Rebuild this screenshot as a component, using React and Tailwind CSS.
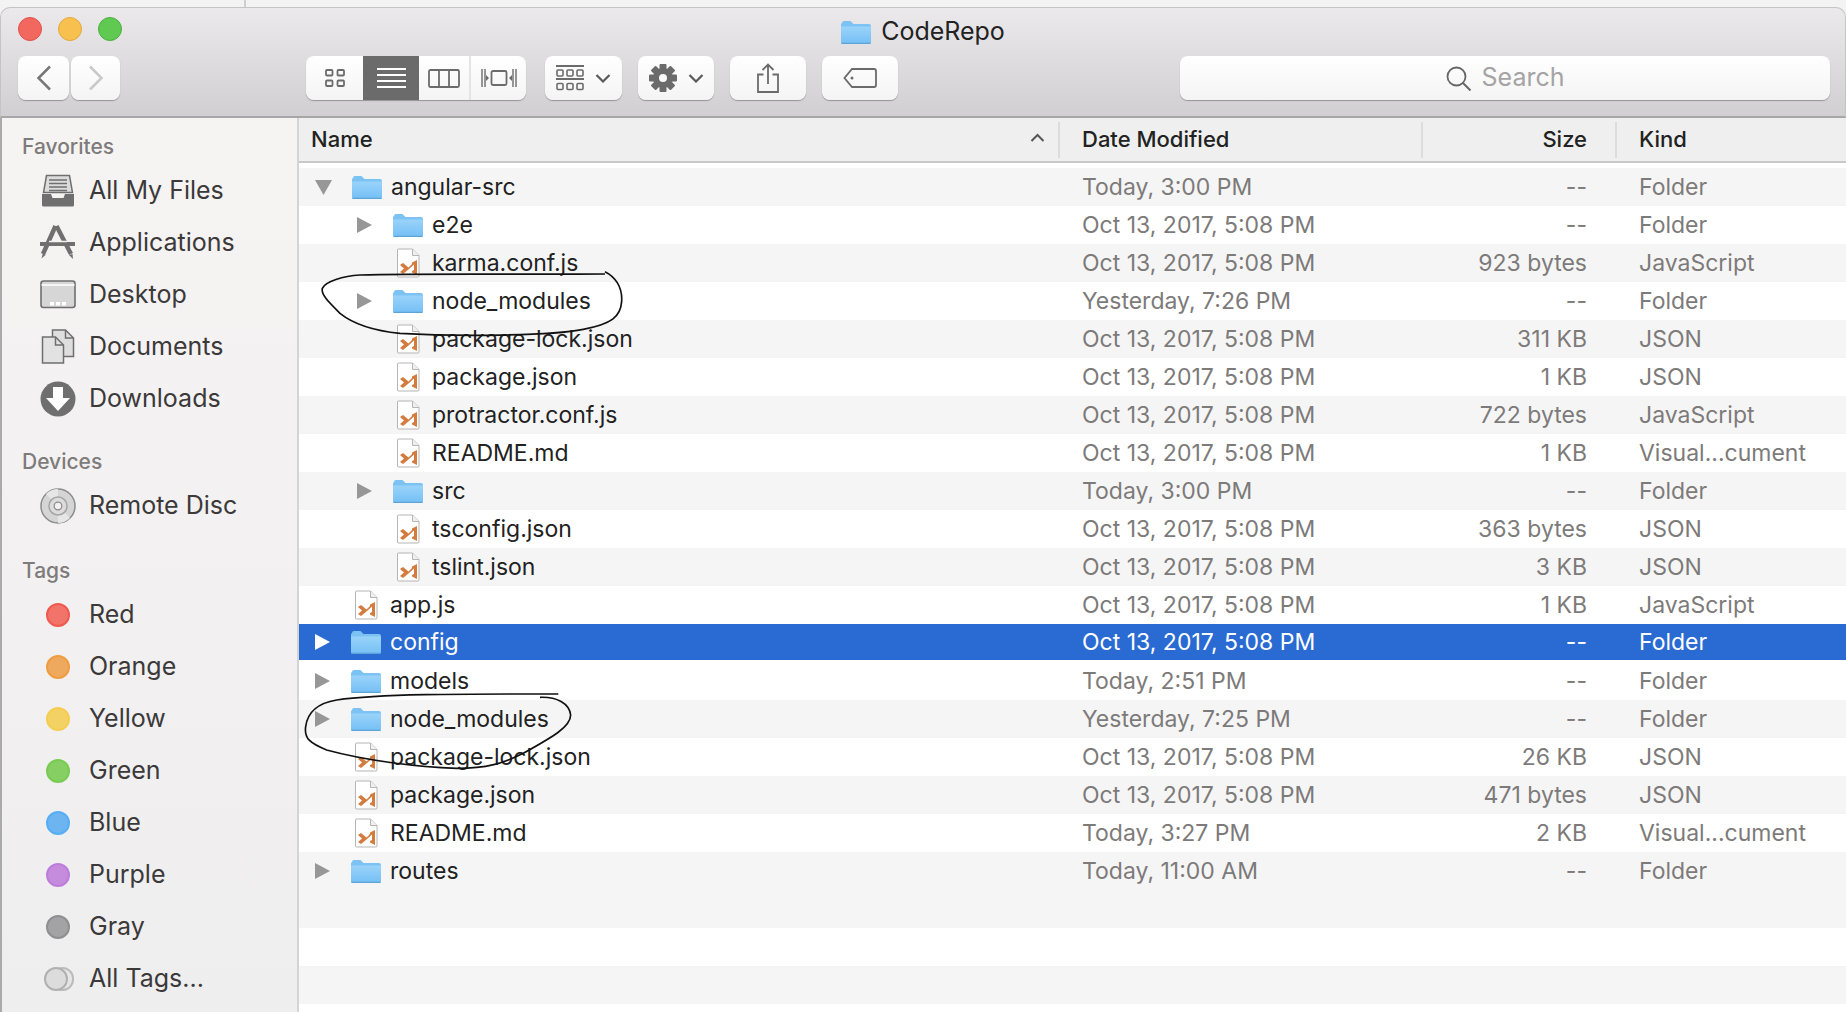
import React from "react";

const font = "font-['Inter','Liberation_Sans',sans-serif]";

const rows = [
  { name: "angular-src", depth: 0, type: "open", date: "Today, 3:00 PM", size: "--", kind: "Folder" },
  { name: "e2e", depth: 1, type: "folder", date: "Oct 13, 2017, 5:08 PM", size: "--", kind: "Folder" },
  { name: "karma.conf.js", depth: 1, type: "file", date: "Oct 13, 2017, 5:08 PM", size: "923 bytes", kind: "JavaScript" },
  { name: "node_modules", depth: 1, type: "folder", date: "Yesterday, 7:26 PM", size: "--", kind: "Folder" },
  { name: "package-lock.json", depth: 1, type: "file", date: "Oct 13, 2017, 5:08 PM", size: "311 KB", kind: "JSON" },
  { name: "package.json", depth: 1, type: "file", date: "Oct 13, 2017, 5:08 PM", size: "1 KB", kind: "JSON" },
  { name: "protractor.conf.js", depth: 1, type: "file", date: "Oct 13, 2017, 5:08 PM", size: "722 bytes", kind: "JavaScript" },
  { name: "README.md", depth: 1, type: "file", date: "Oct 13, 2017, 5:08 PM", size: "1 KB", kind: "Visual...cument" },
  { name: "src", depth: 1, type: "folder", date: "Today, 3:00 PM", size: "--", kind: "Folder" },
  { name: "tsconfig.json", depth: 1, type: "file", date: "Oct 13, 2017, 5:08 PM", size: "363 bytes", kind: "JSON" },
  { name: "tslint.json", depth: 1, type: "file", date: "Oct 13, 2017, 5:08 PM", size: "3 KB", kind: "JSON" },
  { name: "app.js", depth: 0, type: "file", date: "Oct 13, 2017, 5:08 PM", size: "1 KB", kind: "JavaScript" },
  { name: "config", depth: 0, type: "folder", date: "Oct 13, 2017, 5:08 PM", size: "--", kind: "Folder", selected: true },
  { name: "models", depth: 0, type: "folder", date: "Today, 2:51 PM", size: "--", kind: "Folder" },
  { name: "node_modules", depth: 0, type: "folder", date: "Yesterday, 7:25 PM", size: "--", kind: "Folder" },
  { name: "package-lock.json", depth: 0, type: "file", date: "Oct 13, 2017, 5:08 PM", size: "26 KB", kind: "JSON" },
  { name: "package.json", depth: 0, type: "file", date: "Oct 13, 2017, 5:08 PM", size: "471 bytes", kind: "JSON" },
  { name: "README.md", depth: 0, type: "file", date: "Today, 3:27 PM", size: "2 KB", kind: "Visual...cument" },
  { name: "routes", depth: 0, type: "folder", date: "Today, 11:00 AM", size: "--", kind: "Folder" },
];

const emptyRows = [0, 1, 2, 3];

const tags = [
  { name: "Red", cls: "bg-[#f2736a] border-[#ee5a50]" },
  { name: "Orange", cls: "bg-[#efa95e] border-[#f09c40]" },
  { name: "Yellow", cls: "bg-[#f3d163] border-[#f4cd52]" },
  { name: "Green", cls: "bg-[#86cf62] border-[#7acb52]" },
  { name: "Blue", cls: "bg-[#6cb5f0] border-[#56aef5]" },
  { name: "Purple", cls: "bg-[#c58bdc] border-[#bd7edb]" },
  { name: "Gray", cls: "bg-[#a3a3a5] border-[#8f8f91]" },
];

function Folder({ className }) {
  return (
    <svg className={className} viewBox="0 0 30 24">
      <defs>
        <linearGradient id="folderFill" x1="0" y1="0" x2="0" y2="1">
          <stop offset="0" stopColor="#9ad3fa" />
          <stop offset="1" stopColor="#74bff5" />
        </linearGradient>
      </defs>
      <path d="M1 3a2 2 0 0 1 2-2h6.500l3 3H28a2 2 0 0 1 2 2v5H0V4z" fill="#7cc3f4" />
      <path d="M0 6.500h30V22a2 2 0 0 1-2 2H2a2 2 0 0 1-2-2z" fill="url(#folderFill)" />
      <path d="M0 22.800h30V22.500a1.500 1.500 0 0 1-1.500 1.500h-27A1.500 1.500 0 0 1 0 22.500z" fill="#5ba4d8" />
    </svg>
  );
}

function FileIcon({ className }) {
  return (
    <svg className={className} viewBox="0 0 23 30">
      <path d="M1.500 1h14l6.500 6.500V28a1 1 0 0 1-1 1h-19.500a1 1 0 0 1-1-1V2a1 1 0 0 1 1-1z" fill="#fff" stroke="#b5b5b5" />
      <path d="M15.500 1v6.500H22" fill="#efefef" stroke="#b5b5b5" />
      <path d="M20 12v15l-5-2.500V23l2-1v-5.500l-5.500 5L6 26l-3-2 4-3.500L3 17l3-2 5.500 4.500 3.500-3.500V14.500z" fill="#d27c3f" />
    </svg>
  );
}

function Disclosure({ type, selected }) {
  const color = selected ? "#ffffff" : "#979797";
  if (type === "file") return <span className="w-[16px] shrink-0" />;
  if (type === "open") {
    return (
      <svg className="w-[17px] h-[15px] shrink-0" viewBox="0 0 17 15">
        <path d="M0 0h17l-8.500 15z" fill={color} />
      </svg>
    );
  }
  return (
    <svg className="w-[16px] h-[16px] shrink-0" viewBox="0 0 16 16">
      <path d="M0 0l15 8-15 8z" fill={color} />
    </svg>
  );
}

function FileRow({ row, index }) {
  const stripe = index % 2 === 0 ? "bg-[#f5f5f5]" : "bg-white";
  const rowBg = row.selected ? "bg-[#2a6ad3] border-b-2 border-white" : stripe;
  const muted = row.selected ? "text-white" : "text-[#7d7a7a]";
  return (
    <div className={`flex items-center h-[38px] text-[23px] ${rowBg}`}>
      <div className={`flex items-center w-[759px] shrink-0 ${row.depth === 1 ? "pl-[58px]" : "pl-[16px]"}`}>
        <Disclosure type={row.type} selected={row.selected} />
        <span className="ml-[20px] w-[30px] shrink-0 flex justify-center">
          {row.type === "file" ? <FileIcon className="w-[23px] h-[30px]" /> : <Folder className="w-[30px] h-[24px]" />}
        </span>
        <span className={`ml-[9px] ${row.selected ? "text-white" : "text-[#222]"}`}>{row.name}</span>
      </div>
      <div className={`w-[363px] shrink-0 pl-[24px] ${muted}`}>{row.date}</div>
      <div className={`w-[194px] shrink-0 pr-[28px] text-right ${muted}`}>{row.size}</div>
      <div className={`pl-[24px] ${muted}`}>{row.kind}</div>
    </div>
  );
}

function ToolButton({ className, children }) {
  return (
    <div className={`h-[44px] flex items-center justify-center rounded-[8px] bg-gradient-to-b from-white to-[#f4f4f4] shadow-[0_1px_1px_rgba(0,0,0,0.3)] ${className}`}>
      {children}
    </div>
  );
}

function Chevron() {
  return (
    <svg className="w-[16px] h-[9px]" viewBox="0 0 16 9">
      <path d="M1.500 1l6.500 6.500L14.500 1" fill="none" stroke="#5a5a5a" strokeWidth="2.200" />
    </svg>
  );
}

function Gear() {
  const teeth = [0, 45, 90, 135];
  return (
    <svg className="w-[28px] h-[28px]" viewBox="0 0 28 28">
      {teeth.map((a) => (
        <rect key={a} x="10.500" y="0" width="7" height="28" rx="1" fill="#6b6b6b" transform={`rotate(${a} 14 14)`} />
      ))}
      <circle cx="14" cy="14" r="10" fill="#6b6b6b" />
      <circle cx="14" cy="14" r="4" fill="#fafafa" />
    </svg>
  );
}

function SideIcon({ name }) {
  const c = "#6f6f6f";
  return (
    <svg className="w-[36px] h-[36px] shrink-0" viewBox="0 0 36 36">
      {name === "files" && (
        <g>
          <path d="M6.500 2.500h23l3 17h-29z" fill="#dcdcdc" stroke={c} strokeWidth="1.500" />
          <path d="M9 7h18M9 10.500h18M9 14h18M9 17.500h18" stroke={c} strokeWidth="1.400" />
          <path d="M2 21h9l1.500 4h11l1.500-4h9v11a1.500 1.500 0 0 1-1.500 1.500h-29A1.500 1.500 0 0 1 2 32z" fill={c} />
        </g>
      )}
      {name === "apps" && (
        <g>
          <path d="M15.500 1L3 29" stroke={c} strokeWidth="4.500" />
          <path d="M2.800 28.500L1.500 33.500 5.500 30z" fill={c} />
          <path d="M16.500 1L31 29" stroke={c} strokeWidth="4.500" />
          <path d="M29 30l4 4-.5-5z" fill={c} />
          <path d="M0 19h35" stroke={c} strokeWidth="4" />
          <path d="M9 16.500h18" stroke="#f5f2f2" strokeWidth="1.500" />
        </g>
      )}
      {name === "desktop" && (
        <g>
          <rect x="1" y="4" width="34" height="26.500" rx="2.500" fill="#d6d6d6" stroke={c} strokeWidth="1.600" />
          <path d="M1.500 8h33" stroke="#fff" strokeWidth="1.500" />
          <rect x="10" y="25" width="4" height="3.500" fill="#fff" />
          <rect x="16" y="25" width="4" height="3.500" fill="#fff" />
          <rect x="22" y="25" width="4" height="3.500" fill="#fff" />
        </g>
      )}
      {name === "docs" && (
        <g>
          <path d="M12.500 1h13l8 8v18.500h-21z" fill="#dedede" stroke={c} strokeWidth="1.500" />
          <path d="M25.500 1v8h8" fill="none" stroke={c} strokeWidth="1.500" />
          <path d="M2.500 8h13l8 8v18h-21z" fill="#e2e2e2" stroke={c} strokeWidth="1.500" />
          <path d="M15.500 8v8h8" fill="none" stroke={c} strokeWidth="1.500" />
        </g>
      )}
      {name === "downloads" && (
        <g>
          <circle cx="18" cy="18" r="17.500" fill={c} />
          <path d="M13 6h10v11h7L18 30 6 17h7z" fill="#fff" />
        </g>
      )}
      {name === "disc" && (
        <g>
          <circle cx="18" cy="18" r="17" fill="#d6d5d5" stroke="#8d8d8d" strokeWidth="1.500" />
          <path d="M18 18L6 6a17 17 0 0 1 12-5zM18 18l12 12a17 17 0 0 1-12 5z" fill="#e6e6e6" />
          <circle cx="18" cy="18" r="9" fill="#dcdcdc" stroke="#a5a5a5" strokeWidth="1.500" />
          <circle cx="18" cy="18" r="3.800" fill="#f3f1f1" stroke="#8d8d8d" strokeWidth="1.300" />
        </g>
      )}
    </svg>
  );
}

function SideRow({ icon, label }) {
  return (
    <div className="flex items-center h-[52px] pl-[38px] text-[25px] text-[#3b3939]">
      {icon}
      <span className="ml-[13px]">{label}</span>
    </div>
  );
}

function SideTitle({ children }) {
  return <div className="h-[38px] mb-[-1px] flex items-center pl-[20px] text-[21px] font-medium text-[#7e7b7b]">{children}</div>;
}

export default function App() {
  return (
    <div className={`relative h-screen overflow-hidden flex flex-col bg-[#f3f3f3] ${font}`}>
      <div className="h-[7px] shrink-0 ml-[244px] w-[2px] bg-[#cfcfcf]" />

      <header className="h-[111px] shrink-0 flex flex-col rounded-t-[10px] border-t border-x border-[#c4c4c4] border-b-2 border-b-[#a8a6a8] bg-gradient-to-b from-[#ece9ec] to-[#d1cfd1]">
        <div className="relative h-[48px] flex items-center justify-center">
          <div className="absolute left-[17px] top-[9px] flex gap-[16px]">
            <span className="w-[24px] h-[24px] rounded-full bg-[#f2685f] border border-[#e2504a]" />
            <span className="w-[24px] h-[24px] rounded-full bg-[#f8c04e] border border-[#e4a93c]" />
            <span className="w-[24px] h-[24px] rounded-full bg-[#5fc952] border border-[#4eae41]" />
          </div>
          <Folder className="w-[30px] h-[24px]" />
          <span className="ml-[10px] text-[25px] text-[#222]">CodeRepo</span>
        </div>

        <div className="flex items-start pl-[17px] pr-[15px]">
          <ToolButton className="w-[51px]">
            <svg className="w-[16px] h-[26px]" viewBox="0 0 16 26">
              <path d="M14 1.500L2.500 13 14 24.500" fill="none" stroke="#777" strokeWidth="2.500" />
            </svg>
          </ToolButton>
          <ToolButton className="w-[49px] ml-[2px]">
            <svg className="w-[16px] h-[26px]" viewBox="0 0 16 26">
              <path d="M2 1.500L13.500 13 2 24.500" fill="none" stroke="#c9c9c9" strokeWidth="2.500" />
            </svg>
          </ToolButton>

          <div className="ml-[186px] flex w-[220px] h-[44px] rounded-[8px] overflow-hidden bg-gradient-to-b from-white to-[#f4f4f4] shadow-[0_1px_1px_rgba(0,0,0,0.3)]">
            <div className="w-[57px] flex items-center justify-center">
              <svg className="w-[20px] h-[18px]" viewBox="0 0 20 18">
                <g fill="none" stroke="#6b6b6b" strokeWidth="1.800">
                  <rect x="1" y="1" width="6.500" height="5.500" rx="1" />
                  <rect x="12.500" y="1" width="6.500" height="5.500" rx="1" />
                  <rect x="1" y="11.500" width="6.500" height="5.500" rx="1" />
                  <rect x="12.500" y="11.500" width="6.500" height="5.500" rx="1" />
                </g>
              </svg>
            </div>
            <div className="w-[56px] flex items-center justify-center bg-[#6b6b6b]">
              <svg className="w-[29px] h-[20px]" viewBox="0 0 29 20">
                <path d="M0 1h29M0 7h29M0 13h29M0 19h29" stroke="#fff" strokeWidth="2" />
              </svg>
            </div>
            <div className="w-[52px] flex items-center justify-center border-r-2 border-[#e4e4e4]">
              <svg className="w-[32px] h-[19px]" viewBox="0 0 32 19">
                <rect x="1" y="1" width="30" height="17" rx="1.500" fill="none" stroke="#6b6b6b" strokeWidth="1.800" />
                <path d="M11 1v17M21 1v17" stroke="#6b6b6b" strokeWidth="1.800" />
              </svg>
            </div>
            <div className="flex-1 flex items-center justify-center">
              <svg className="w-[36px] h-[20px]" viewBox="0 0 36 20">
                <rect x="10.500" y="3" width="15" height="14" rx="1.500" fill="none" stroke="#6b6b6b" strokeWidth="1.800" />
                <path d="M1 1v18M4 1v18M32 1v18M35 1v18" stroke="#6b6b6b" strokeWidth="1.400" />
                <path d="M5 7l3 3-3 3zM31 7l-3 3 3 3z" fill="#6b6b6b" />
              </svg>
            </div>
          </div>

          <ToolButton className="w-[77px] ml-[19px] gap-[11px]">
            <svg className="w-[28px] h-[26px]" viewBox="0 0 28 26">
              <path d="M0 1h28M0 14h28" stroke="#6b6b6b" strokeWidth="1.800" />
              <g fill="none" stroke="#6b6b6b" strokeWidth="1.600">
                <rect x="1" y="5" width="6" height="6" rx="1" />
                <rect x="11" y="5" width="6" height="6" rx="1" />
                <rect x="21" y="5" width="6" height="6" rx="1" />
                <rect x="1" y="18.500" width="6" height="6" rx="1" />
                <rect x="11" y="18.500" width="6" height="6" rx="1" />
                <rect x="21" y="18.500" width="6" height="6" rx="1" />
              </g>
            </svg>
            <Chevron />
          </ToolButton>
          <ToolButton className="w-[76px] ml-[16px] gap-[11px]">
            <Gear />
            <Chevron />
          </ToolButton>
          <ToolButton className="w-[76px] ml-[16px]">
            <svg className="w-[24px] h-[30px]" viewBox="0 0 24 30">
              <path d="M7.500 11.500H2v17.500h20V11.500h-5.500" fill="none" stroke="#6b6b6b" strokeWidth="1.800" />
              <path d="M12 21V1.500M6.500 7L12 1.500 17.500 7" fill="none" stroke="#6b6b6b" strokeWidth="1.800" />
            </svg>
          </ToolButton>
          <ToolButton className="w-[76px] ml-[16px]">
            <svg className="w-[34px] h-[20px]" viewBox="0 0 34 20">
              <path d="M9 1h22a2 2 0 0 1 2 2v14a2 2 0 0 1-2 2H9L1.500 10z" fill="none" stroke="#6b6b6b" strokeWidth="1.800" />
              <circle cx="9" cy="10" r="1.500" fill="#6b6b6b" />
            </svg>
          </ToolButton>

          <div className="ml-auto w-[650px] h-[44px] flex items-center justify-center rounded-[8px] bg-gradient-to-b from-white to-[#f4f4f4] shadow-[0_1px_1px_rgba(0,0,0,0.3)]">
            <svg className="w-[26px] h-[25px]" viewBox="0 0 26 25">
              <circle cx="10.500" cy="10.500" r="9" fill="none" stroke="#666" strokeWidth="1.800" />
              <path d="M17 17l7.500 7.500" stroke="#666" strokeWidth="2" />
            </svg>
            <span className="ml-[10px] text-[25px] text-[#a5a3a3]">Search</span>
          </div>
        </div>
      </header>

      <div className="flex flex-1 min-h-0">
        <aside className="w-[299px] shrink-0 pt-[10px] border-l-2 border-l-[#aaa] border-r-2 border-r-[#d4d4d4] bg-gradient-to-b from-[#f6f3f3] to-[#efeeef]">
          <SideTitle>Favorites</SideTitle>
          <SideRow icon={<SideIcon name="files" />} label="All My Files" />
          <SideRow icon={<SideIcon name="apps" />} label="Applications" />
          <SideRow icon={<SideIcon name="desktop" />} label="Desktop" />
          <SideRow icon={<SideIcon name="docs" />} label="Documents" />
          <SideRow icon={<SideIcon name="downloads" />} label="Downloads" />

          <div className="mt-[18px]">
            <SideTitle>Devices</SideTitle>
          </div>
          <SideRow icon={<SideIcon name="disc" />} label="Remote Disc" />

          <div className="mt-[20px]">
            <SideTitle>Tags</SideTitle>
          </div>
          {tags.map((t) => (
            <SideRow
              key={t.name}
              label={t.name}
              icon={
                <span className="w-[36px] flex justify-center shrink-0">
                  <span className={`w-[24px] h-[24px] rounded-full border-2 ${t.cls}`} />
                </span>
              }
            />
          ))}
          <SideRow
            label="All Tags..."
            icon={
              <span className="relative w-[36px] h-[24px] shrink-0">
                <span className="absolute left-[11px] top-0 w-[23px] h-[24px] rounded-full border-2 border-[#bbb] bg-[#e6e6e6]" />
                <span className="absolute left-[4px] top-0 w-[24px] h-[24px] rounded-full border-2 border-[#b0b0b0] bg-[#dcdcdc]" />
              </span>
            }
          />
        </aside>

        <main className="flex-1 min-w-0 bg-white overflow-hidden">
          <div className="h-[45px] flex items-center bg-[#efefef] border-b-2 border-[#c8c8c8] text-[22px] text-[#222] font-medium">
            <div className="relative w-[759px] shrink-0 pl-[12px]">
              Name
              <svg className="absolute right-[13px] top-[10px] w-[15px] h-[9px]" viewBox="0 0 15 9">
                <path d="M1.500 8L7.500 2l6 6" fill="none" stroke="#555" strokeWidth="2" />
              </svg>
            </div>
            <div className="w-[363px] shrink-0 h-[36px] flex items-center pl-[22px] border-l-2 border-[#dcdcdc]">Date Modified</div>
            <div className="w-[194px] shrink-0 h-[36px] flex items-center justify-end pr-[28px] border-l-2 border-[#dcdcdc]">Size</div>
            <div className="flex-1 h-[36px] flex items-center pl-[22px] border-l-2 border-[#dcdcdc]">Kind</div>
          </div>
          <div className="mt-[5px]">
            {rows.map((row, i) => (
              <FileRow key={row.name + i} row={row} index={i} />
            ))}
            {emptyRows.map((n) => (
              <div key={n} className={`h-[38px] ${n % 2 === 0 ? "bg-[#f5f5f5]" : "bg-white"}`} />
            ))}
          </div>
        </main>
      </div>

      {/* pen marks drawn over the list */}
      <svg className="absolute left-0 top-0 w-[1846px] h-[1012px] pointer-events-none" viewBox="0 0 1846 1012">
        <path
          transform="translate(290 120) scale(0.3333)"
          d="M945 455C975 470 998 500 995 545C992 590 965 612 880 628C780 648 500 650 330 640C250 632 190 612 150 580C120 550 92 525 97 505C105 485 160 468 210 465C400 460 700 464 945 462"
          fill="none"
          stroke="#111"
          strokeWidth="5"
        />
        <path
          transform="translate(290 620) scale(0.3333)"
          d="M750 232C800 230 838 250 842 285C842 320 790 350 700 400C640 430 590 445 500 445C380 442 220 420 110 390C60 370 42 355 47 320C52 280 80 250 140 240C280 220 560 222 805 222"
          fill="none"
          stroke="#111"
          strokeWidth="5"
        />
      </svg>
    </div>
  );
}
